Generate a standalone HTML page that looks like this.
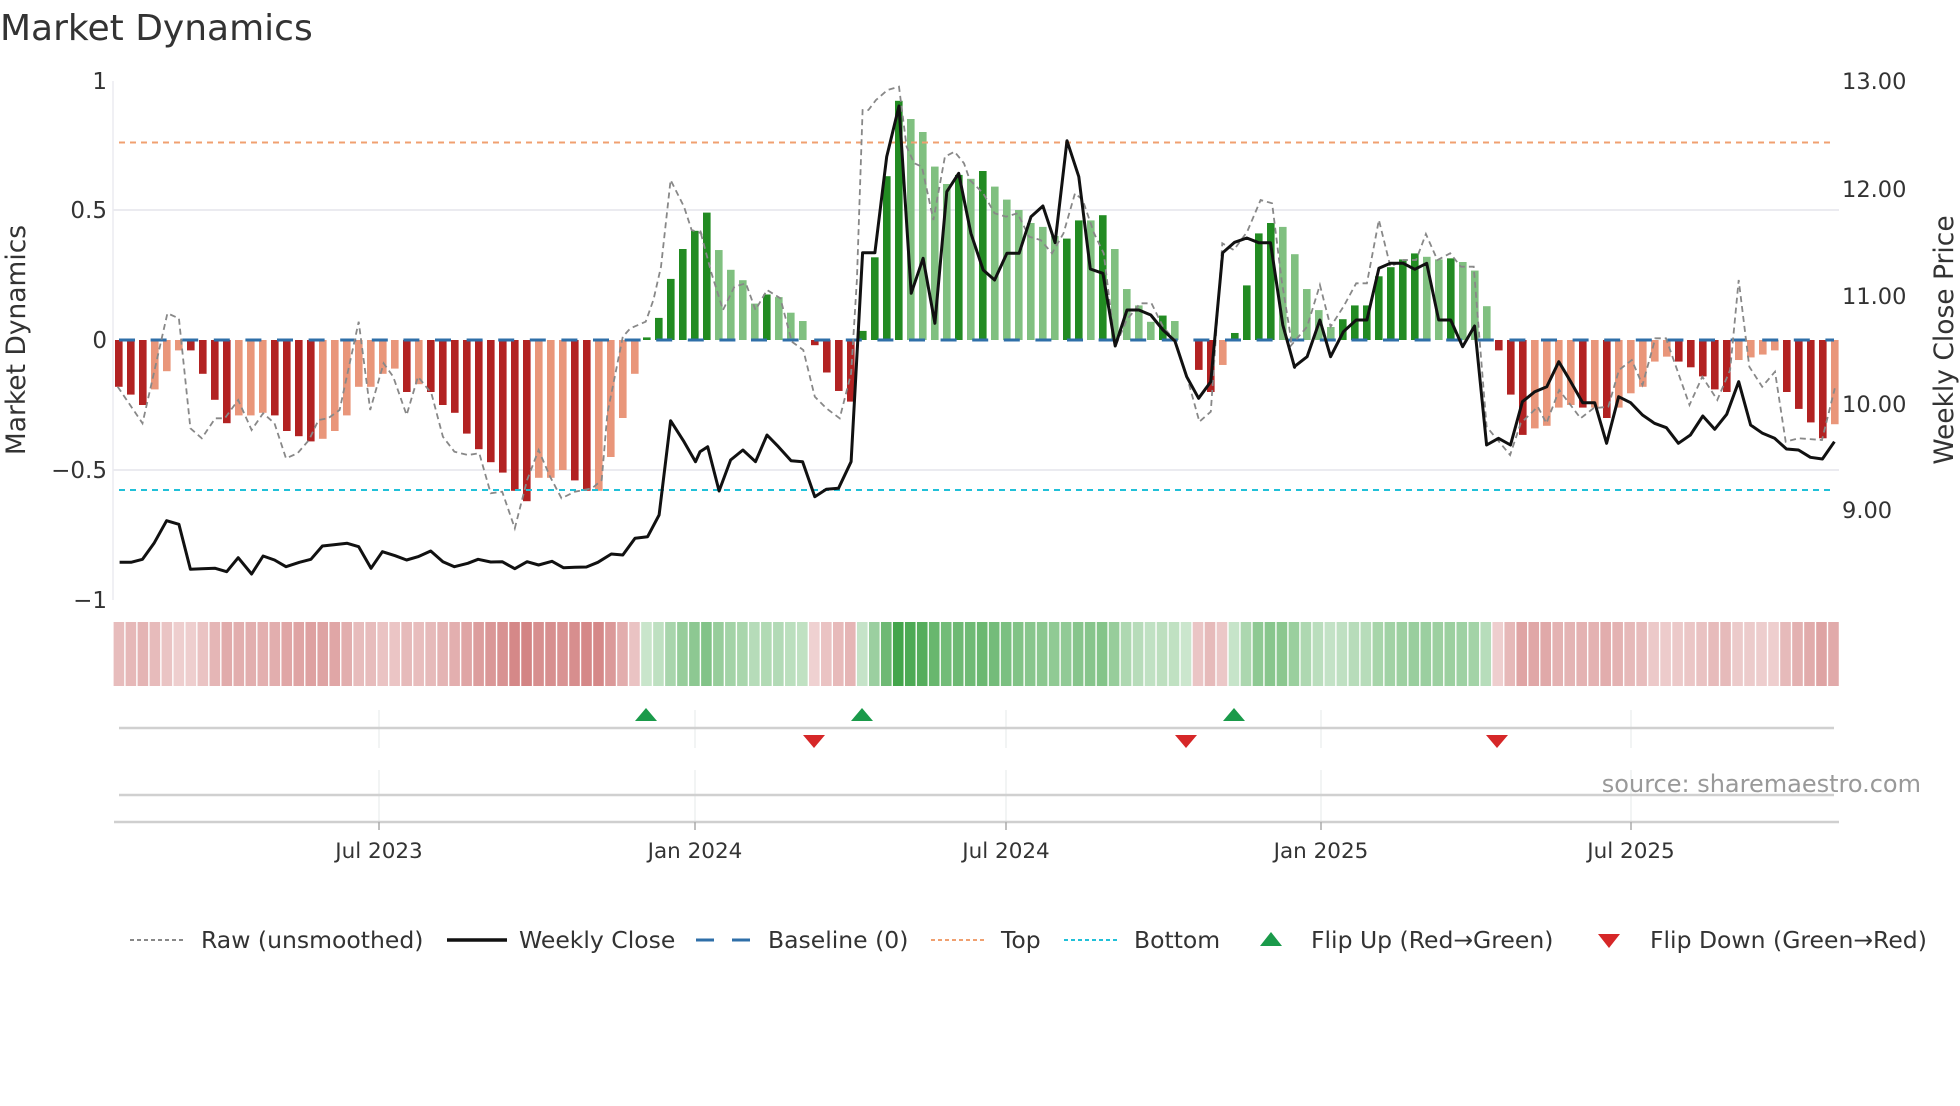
<!DOCTYPE html>
<html><head><meta charset="utf-8">
<style>
html,body{margin:0;padding:0;background:#fff;}
body{width:1960px;height:1102px;overflow:hidden;font-family:"DejaVu Sans","Liberation Sans",sans-serif;}
svg text{font-family:"DejaVu Sans","Liberation Sans",sans-serif;}
</style></head>
<body>
<svg id="s" width="1960" height="1102" viewBox="0 0 1960 1102" xmlns="http://www.w3.org/2000/svg">
<text x="0" y="40" font-size="36" fill="#333">Market Dynamics</text>
<line x1="113" y1="210" x2="1839" y2="210" stroke="#ebebf0" stroke-width="2"/>
<line x1="113" y1="470" x2="1839" y2="470" stroke="#ebebf0" stroke-width="2"/>
<line x1="113" y1="81" x2="113" y2="600" stroke="#ebebf0" stroke-width="1.5"/>
<g font-size="23" fill="#333" text-anchor="end">
<text x="107" y="89">1</text>
<text x="107" y="218">0.5</text>
<text x="107" y="348">0</text>
<text x="107" y="478">−0.5</text>
<text x="107" y="608">−1</text>
</g>
<g font-size="22.5" fill="#333">
<text x="1842" y="89">13.00</text>
<text x="1842" y="197">12.00</text>
<text x="1842" y="304">11.00</text>
<text x="1842" y="412">10.00</text>
<text x="1842" y="518">9.00</text>
</g>
<text transform="translate(25,340) rotate(-90)" font-size="26.5" fill="#333" text-anchor="middle">Market Dynamics</text>
<text transform="translate(1953,340) rotate(-90)" font-size="26.5" fill="#333" text-anchor="middle">Weekly Close Price</text>
<g id="bars"></g>
<line x1="119" y1="340" x2="1834" y2="340" stroke="#2f6fa8" stroke-width="3" stroke-dasharray="16 15.6"/>
<line x1="119" y1="142.5" x2="1831" y2="142.5" stroke="#f0a070" stroke-width="2" stroke-dasharray="6 5"/>
<line x1="119" y1="490" x2="1831" y2="490" stroke="#20c0d8" stroke-width="2" stroke-dasharray="6 5"/>
<polyline id="raw" fill="none" stroke="#888" stroke-width="1.8" stroke-dasharray="6 4"/>
<polyline id="price" fill="none" stroke="#111" stroke-width="3" stroke-linejoin="round"/>
<g id="heat"></g>
<g stroke="#e4eaea" stroke-width="1">
<line x1="379" y1="710" x2="379" y2="748"/><line x1="695" y1="710" x2="695" y2="748"/>
<line x1="1006" y1="710" x2="1006" y2="748"/><line x1="1321" y1="710" x2="1321" y2="748"/>
<line x1="1631" y1="710" x2="1631" y2="748"/>
<line x1="379" y1="770" x2="379" y2="822"/><line x1="695" y1="770" x2="695" y2="822"/>
<line x1="1006" y1="770" x2="1006" y2="822"/><line x1="1321" y1="770" x2="1321" y2="822"/>
<line x1="1631" y1="770" x2="1631" y2="822"/>
</g>
<line x1="119" y1="728" x2="1834" y2="728" stroke="#d0d0d0" stroke-width="2.5"/>
<line x1="119" y1="795" x2="1834" y2="795" stroke="#d0d0d0" stroke-width="2.5"/>
<line x1="114" y1="822" x2="1839" y2="822" stroke="#cfcfcf" stroke-width="2.5"/>
<g fill="#1a9a4a">
<polygon points="635,721 657,721 646,708"/>
<polygon points="851,721 873,721 862,708"/>
<polygon points="1223,721 1245,721 1234,708"/>
</g>
<g fill="#d62728">
<polygon points="803,735 825,735 814,748"/>
<polygon points="1175,735 1197,735 1186,748"/>
<polygon points="1486,735 1508,735 1497,748"/>
</g>
<g stroke="#aaa" stroke-width="1.5">
<line x1="379" y1="822" x2="379" y2="830"/><line x1="695" y1="822" x2="695" y2="830"/>
<line x1="1006" y1="822" x2="1006" y2="830"/><line x1="1321" y1="822" x2="1321" y2="830"/>
<line x1="1631" y1="822" x2="1631" y2="830"/>
</g>
<g font-size="21.5" fill="#333" text-anchor="middle">
<text x="379" y="858">Jul 2023</text><text x="695" y="858">Jan 2024</text>
<text x="1006" y="858">Jul 2024</text><text x="1321" y="858">Jan 2025</text>
<text x="1631" y="858">Jul 2025</text>
</g>
<text x="1921" y="792" font-size="24" fill="#999" text-anchor="end">source: sharemaestro.com</text>
<g font-size="23.5" fill="#333">
<line x1="130" y1="940" x2="185" y2="940" stroke="#888" stroke-width="2" stroke-dasharray="4 3"/>
<text x="201" y="948">Raw (unsmoothed)</text>
<line x1="447" y1="940" x2="507" y2="940" stroke="#111" stroke-width="3.5"/>
<text x="519" y="948">Weekly Close</text>
<line x1="696" y1="940" x2="754" y2="940" stroke="#2f6fa8" stroke-width="3" stroke-dasharray="18 18"/>
<text x="768" y="948">Baseline (0)</text>
<line x1="931" y1="940" x2="986" y2="940" stroke="#f0a070" stroke-width="2" stroke-dasharray="4 3"/>
<text x="1001" y="948">Top</text>
<line x1="1064" y1="940" x2="1119" y2="940" stroke="#20c0d8" stroke-width="2" stroke-dasharray="4 3"/>
<text x="1134" y="948">Bottom</text>
<polygon points="1260,946 1282,946 1271,932" fill="#1a9a4a"/>
<text x="1311" y="948">Flip Up (Red→Green)</text>
<polygon points="1598,934 1620,934 1609,948" fill="#d62728"/>
<text x="1650" y="948">Flip Down (Green→Red)</text>
</g>
</svg>
<script>
var V=[-0.18,-0.21,-0.25,-0.19,-0.12,-0.04,-0.04,-0.13,-0.23,-0.32,-0.29,-0.29,-0.28,-0.29,-0.35,-0.37,-0.39,-0.38,-0.35,-0.29,-0.18,-0.18,-0.13,-0.11,-0.20,-0.17,-0.20,-0.25,-0.28,-0.36,-0.42,-0.47,-0.51,-0.58,-0.62,-0.53,-0.53,-0.50,-0.54,-0.58,-0.58,-0.45,-0.30,-0.13,
0.01,0.085,0.235,0.35,0.42,0.49,0.346,0.27,0.23,0.14,0.175,0.165,0.105,0.073,
-0.02,-0.125,-0.196,-0.237,
0.035,0.318,0.63,0.92,0.85,0.80,0.667,0.60,0.635,0.62,0.65,0.59,0.54,0.50,0.45,0.435,0.40,0.39,0.46,0.46,0.48,0.35,0.196,0.133,0.07,0.094,0.073,0,
-0.115,-0.2,-0.096,
0.027,0.21,0.41,0.45,0.435,0.33,0.196,0.115,0.05,0.08,0.133,0.133,0.245,0.28,0.31,0.333,0.32,0.31,0.314,0.30,0.267,0.13,
-0.04,-0.21,-0.365,-0.34,-0.33,-0.26,-0.25,-0.26,-0.26,-0.30,-0.26,-0.205,-0.18,-0.083,-0.064,-0.083,-0.105,-0.14,-0.19,-0.2,-0.077,-0.067,-0.056,-0.04,-0.2,-0.265,-0.317,-0.378,-0.324];
var T="DDDLLLDDDDLLLDDDDLLLLLLLDLDDDDDDDDDLLLDDLLLL"+"DDDDDDLLLLDLLL"+"DDDD"+"DDDDLLLLDLDLLLLLLDDLDLLLLDLL"+"DDL"+"DDDDLLLLLDDDDDDDLLDLLL"+"DDDLLLLDLDLLLLLDDDDDLLLLDDDDL";
var NS="http://www.w3.org/2000/svg";
function el(t,a,p){var e=document.createElementNS(NS,t);for(var k in a)e.setAttribute(k,a[k]);p.appendChild(e);return e;}
var bars=document.getElementById('bars'),heat=document.getElementById('heat');
for(var i=0;i<V.length;i++){
 var v=V[i],cx=118.8+i*12,d=T[i]==='D',h=Math.abs(v)*260;
 var col=v>=0?(d?'#228b22':'#80c080'):(d?'#b22222':'#e9967a');
 if(h>0.5) el('rect',{x:cx-3.8,y:v>=0?340-h:340,width:7.6,height:h,fill:col},bars);
 var a=Math.abs(v),c;
 if(v>=0){var o=Math.min(1,0.28+0.72*a/0.92);c='rgba(67,165,75,'+o.toFixed(3)+')';}
 else{var o=Math.min(1,0.28+0.5*a/0.6);c='rgba(200,100,100,'+o.toFixed(3)+')';}
 el('rect',{x:113+i*11.99+0.6,y:622,width:10.6,height:64,fill:c},heat);
}
function conv(arr,ox,sx){var o=[];for(var i=0;i<arr.length;i+=2)o.push((ox+arr[i]/sx).toFixed(1)+','+(80+arr[i+1]/3).toFixed(1));return o;}
var r3=[20,920,85,1030,150,700,180,715,210,1045,240,1075,275,1015,300,1015,335,960,370,1050,400,1000,430,1030,460,1135,490,1120,520,1080,545,1020,570,1015,600,990,650,725,680,990,715,850,740,890,775,1005,805,890,840,940,870,1070,900,1115,935,1125,965,1120,995,1240,1025,1235,1058,1345,1090,1200,1120,1110,1150,1190,1180,1255,1215,1235,1260,1225,1285,1200,1300,1000,1340,770,1360,745,1400,725,1420,660,1440,560,1465,300,1500,380,1520,450,1545,460];
var r4=[0,450,30,580,60,690,90,620,120,610,145,690,175,630,210,655,240,785,270,810,300,950,330,985,365,1015,395,880,410,600,425,90,440,90,460,60,490,30,520,20,540,200,560,250,580,260,610,420,640,230,665,215,690,250,705,300,740,340,770,400,800,410,830,400,860,470,890,480,920,520,950,460,980,340,1000,360,1030,460,1055,520,1085,800,1115,720,1150,670,1180,670,1210,740,1240,780,1270,880,1305,1025,1335,995,1365,490,1395,510,1430,455,1465,360,1495,370,1520,600,1545,780];
var r5=[0,800,40,740,70,615,95,740,125,680,155,610,180,610,208,420,235,560,265,540,295,540,318,462,345,540,375,520,400,560,430,560,460,1040,515,1125,540,1030,580,980,600,1030,630,930,680,1015,710,985,745,980,770,870,800,840,825,915,855,775,880,775,935,975,965,890,1000,960,1030,870,1050,600,1075,860,1105,920,1135,875,1160,1085,1190,1075,1245,1080,1275,925];
var p3=[25,1447,55,1447,85,1438,115,1390,148,1322,180,1333,210,1468,240,1466,275,1465,305,1475,335,1433,370,1482,400,1428,430,1440,460,1460,495,1447,525,1438,555,1398,585,1394,620,1390,650,1400,682,1465,712,1415,745,1427,775,1440,805,1430,838,1413,870,1445,900,1460,935,1450,962,1438,995,1446,1025,1445,1058,1466,1090,1445,1120,1455,1155,1444,1185,1463,1215,1462,1245,1461,1275,1447,1310,1422,1340,1425,1372,1375,1405,1370,1435,1305,1465,1022,1500,1085,1530,1145];
var p4=[0,1115,20,1100,50,1233,80,1140,112,1110,145,1145,175,1065,205,1100,238,1142,268,1145,300,1250,330,1228,362,1225,395,1145,425,518,457,518,488,230,520,78,552,640,583,535,614,730,645,335,676,280,708,460,740,570,770,600,802,520,834,520,865,410,896,378,928,488,959,182,990,290,1020,567,1053,580,1085,798,1116,690,1147,690,1178,705,1210,750,1241,783,1272,890,1303,955,1335,905,1366,518,1397,487,1429,474,1460,488,1491,488,1523,735,1554,862];
var p5=[10,860,40,830,70,720,95,830,125,755,155,720,180,720,208,565,235,550,265,550,292,568,320,550,348,720,376,720,404,800,432,738,460,1095,488,1075,516,1095,544,965,573,935,601,920,629,845,657,905,685,968,713,968,741,1090,769,950,797,968,825,1005,853,1030,881,1043,909,1090,937,1065,966,1008,994,1048,1022,1003,1050,905,1078,1035,1106,1060,1134,1075,1162,1107,1190,1110,1218,1132,1246,1137,1274,1085];
var s3=1568/600,s5=1568/670;
document.getElementById('raw').setAttribute('points',conv(r3,110,s3).concat(conv(r4,700,s3),conv(r5,1290,s5)).join(' '));
document.getElementById('price').setAttribute('points',conv(p3,110,s3).concat(conv(p4,700,s3),conv(p5,1290,s5)).join(' '));
</script>
</body></html>
